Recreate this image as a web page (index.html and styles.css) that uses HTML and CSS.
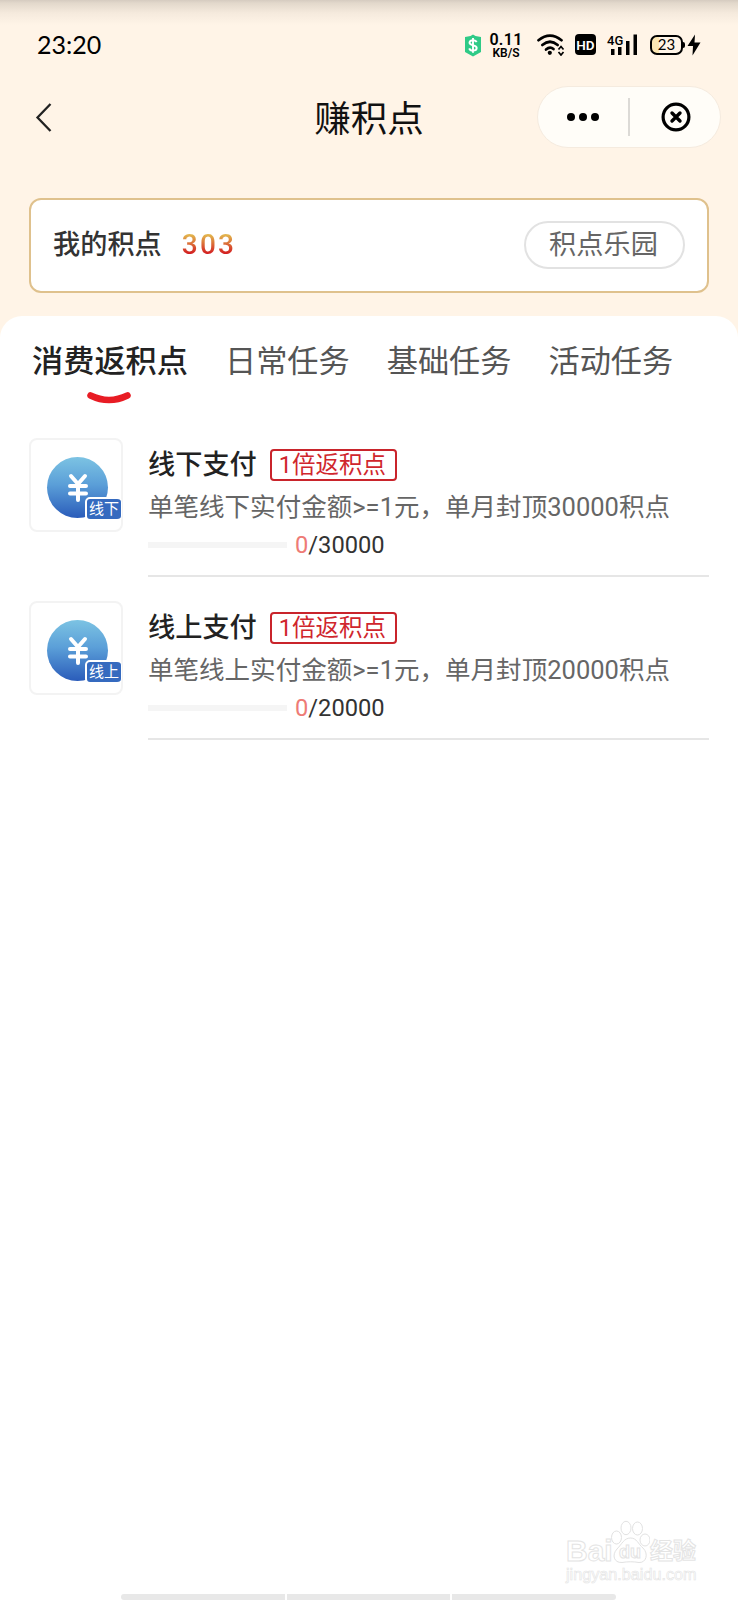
FILE: index.html
```html
<!DOCTYPE html>
<html lang="zh-CN">
<head>
  <meta charset="UTF-8">
  <meta name="viewport" content="width=device-width, initial-scale=1">
  <title>赚积点</title>
  <link rel="stylesheet" href="styles.css">
</head>
<body>
  <div class="status-bar">
    <span class="time">23:20</span>
    <div class="status-icons">
      <svg class="icon-pay" width="18" height="23" viewBox="0 0 18 23">
        <path d="M9 0.5 L11.5 2 L17 3 V18 L9 22.5 L1 18 V3 L6.500 2 Z" fill="#2fca87"/>
        <path d="M12.600 8.200 C12 6.600 10.500 6.200 9 6.200 C7 6.200 5.500 7.200 5.500 8.700 C5.500 12 12.700 10.400 12.700 14 C12.700 15.700 11 16.600 9 16.600 C7.200 16.600 5.700 15.900 5.200 14.400 M9 4 V18.800" fill="none" stroke="#fff" stroke-width="1.900"/>
      </svg>
      <div class="speed"><b>0.11</b><i>KB/S</i></div>
      <svg class="icon-wifi" width="28" height="22" viewBox="0 0 28 22">
        <g fill="none" stroke="#000" stroke-width="2.700" stroke-linecap="round">
          <path d="M1.500 6.200 Q13 -3 24.500 6.200"/>
          <path d="M5.300 11 Q13 4.500 20.700 11"/>
          <path d="M9 15.500 Q13 12 16.500 15"/>
        </g>
        <circle cx="12.800" cy="18.800" r="2.100"/>
        <path d="M21.500 15.500 L24 12.500 L26.500 15.500 M21.500 18 L24 21 L26.500 18" fill="none" stroke="#000" stroke-width="1.700"/>
      </svg>
      <span class="hd">HD</span>
      <div class="signal">
        <span>4G</span>
        <svg width="30" height="22" viewBox="0 0 30 22">
          <path d="M4 15h3.500v6H4z M11 13h3.500v8H11z M19 7h3.500v14H19z M26.500 0.500H30v20.500h-3.500z"/>
        </svg>
      </div>
      <div class="battery"><span>23</span></div>
      <svg class="icon-bolt" width="14" height="22" viewBox="0 0 14 22">
        <path d="M8 0.500 L0.500 12 H6 L5.500 21.500 L13.500 8.500 H7.500 Z"/>
      </svg>
    </div>
  </div>

  <div class="nav">
    <svg class="back" width="18" height="32" viewBox="0 0 18 32">
      <path d="M15.500 3 L2.500 16.500 L15.500 30" fill="none" stroke="#222" stroke-width="2.300"/>
    </svg>
    <h1>赚积点</h1>
    <div class="capsule">
      <svg width="34" height="10" viewBox="0 0 34 10">
        <circle cx="5" cy="5" r="4"/><circle cx="17" cy="5" r="4"/><circle cx="29" cy="5" r="4"/>
      </svg>
      <span class="line"></span>
      <svg width="30" height="30" viewBox="0 0 30 30">
        <circle cx="15" cy="15" r="12.900" fill="none" stroke="#000" stroke-width="3.200"/>
        <path d="M11 11 L19 19 M19 11 L11 19" stroke="#000" stroke-width="3.400" stroke-linecap="round"/>
      </svg>
    </div>
  </div>

  <div class="card">
    <span class="label">我的积点</span>
    <span class="points">303</span>
    <a class="park">积点乐园</a>
  </div>

  <div class="wrap">
    <div class="tabs">
      <div class="tab active">消费返积点
        <svg class="smile" width="44" height="14" viewBox="0 0 44 14">
          <path d="M3.500 3.500 Q22 12.500 40.500 3.500" fill="none" stroke="#e81c24" stroke-width="6.500" stroke-linecap="round"/>
        </svg>
      </div>
      <div class="tab">日常任务</div>
      <div class="tab">基础任务</div>
      <div class="tab">活动任务</div>
    </div>

    <ul class="list">
      <li>
        <div class="thumb">
          <div class="coin">
            <svg width="22" height="30" viewBox="0 0 22 30">
              <path d="M4 3 L11 11 L18 3 M11 11 V27 M3 13 H19 M3 20.500 H19" fill="none" stroke="#fff" stroke-width="4" stroke-linecap="round"/>
            </svg>
          </div>
          <span class="badge">线下</span>
        </div>
        <div class="info">
          <div class="title">线下支付<span class="tag">1倍返积点</span></div>
          <p class="desc">单笔线下实付金额&gt;=1元，单月封顶30000积点</p>
          <div class="progress"><span class="bar"></span><em>0</em>/30000</div>
        </div>
      </li>
      <li>
        <div class="thumb">
          <div class="coin">
            <svg width="22" height="30" viewBox="0 0 22 30">
              <path d="M4 3 L11 11 L18 3 M11 11 V27 M3 13 H19 M3 20.500 H19" fill="none" stroke="#fff" stroke-width="4" stroke-linecap="round"/>
            </svg>
          </div>
          <span class="badge">线上</span>
        </div>
        <div class="info">
          <div class="title">线上支付<span class="tag">1倍返积点</span></div>
          <p class="desc">单笔线上实付金额&gt;=1元，单月封顶20000积点</p>
          <div class="progress"><span class="bar"></span><em>0</em>/20000</div>
        </div>
      </li>
    </ul>
  </div>

  <div class="watermark">
    <div class="logo">
      <span class="bai">Bai</span>
      <div class="paw">
        <svg width="40" height="44" viewBox="0 0 40 44">
          <g fill="#fff" stroke="#e2e2e2" stroke-width="1">
            <ellipse cx="6.500" cy="17.500" rx="5" ry="6.500"/>
            <ellipse cx="16" cy="8" rx="5" ry="6.700"/>
            <ellipse cx="27.500" cy="8.500" rx="5" ry="6.500"/>
            <ellipse cx="35" cy="20" rx="5" ry="6"/>
            <path d="M20.500 18 C27 18 28 24 33 28 C39 34 36 43 29 42.500 C23 41.500 18 41.500 12 42.500 C4 43 1.500 35 7 29 C12 24 14 18 20.500 18 Z"/>
          </g>
        </svg>
        <span>du</span>
      </div>
      <span class="jy">经验</span>
    </div>
    <div class="site">jingyan.baidu.com</div>
  </div>

  <div class="home-bar"><i></i><i></i><i></i></div>
</body>
</html>
```

FILE: styles.css
```css
* {
  margin: 0;
  padding: 0;
  box-sizing: border-box;
}
html, body {
  width: 100%;
  height: 1600px;
}
body {
  position: relative;
  display: flex;
  flex-direction: column;
  font-family: Roboto, "Noto Sans CJK SC", sans-serif;
  color: #333;
  background: linear-gradient(#d5cbc0 0, #e2d8cb 3px, #f5eadd 13px, #fff4e7 25px);
  overflow: hidden;
}
svg {
  display: block;
  flex: none;
}
i, em {
  font-style: normal;
}

/* status bar */
.status-bar {
  display: flex;
  justify-content: space-between;
  height: 86px;
  padding: 34px 37px 0 37px;
  color: #000;
}
.time {
  height: 24px;
  line-height: 21px;
  font-family: Lato, sans-serif;
  font-size: 25px;
}
.status-icons {
  display: flex;
  height: 22px;
}
.speed {
  display: flex;
  flex-direction: column;
  width: 34px;
  margin: -1px 0 0 7px;
  text-align: center;
}
.speed b {
  font-size: 16px;
  font-weight: 600;
  line-height: 14px;
  letter-spacing: .3px;
}
.speed i {
  font-size: 12px;
  font-weight: 600;
  line-height: 12px;
}
.icon-wifi {
  margin: 0 0 0 14px;
}
.hd {
  width: 21px;
  height: 21px;
  margin: 0 0 0 10px;
  border-radius: 4px;
  font-size: 13.5px;
  font-weight: 600;
  line-height: 22px;
  text-align: center;
  color: #fff;
  background: #000;
}
.signal {
  position: relative;
  margin-left: 11px;
}
.signal span {
  position: absolute;
  left: 0;
  top: 1px;
  font-size: 13px;
  font-weight: 500;
  line-height: 12px;
}
.battery {
  position: relative;
  width: 33px;
  height: 20px;
  margin: 1px 0 0 13px;
  border: 2px solid #000;
  border-radius: 7px;
  font-family: Lato, sans-serif;
  font-size: 15px;
  line-height: 15px;
  text-align: center;
  background: linear-gradient(90deg, #fbe6b4 25%, transparent 26%);
}
.battery::after {
  content: "";
  position: absolute;
  right: -4px;
  top: 5px;
  width: 2px;
  height: 6px;
  border-radius: 0 2px 2px 0;
  background: #000;
}
.icon-bolt {
  margin-left: 4px;
}

/* nav */
.nav {
  display: grid;
  grid-template-columns: 184px 1fr 184px;
  align-items: center;
  height: 62px;
  padding: 0 17px;
}
.back {
  margin-left: 18px;
}
.nav h1 {
  height: 62px;
  font-size: 36.5px;
  font-weight: 400;
  line-height: 68px;
  text-align: center;
  color: #111;
}
.capsule {
  display: flex;
  align-items: center;
  width: 184px;
  height: 62px;
  padding-left: 28px;
  border: 1px solid #f5ebdf;
  border-radius: 31px;
  background: #fffdf8;
}
.capsule .line {
  width: 2px;
  height: 38px;
  margin: 0 31px 0 28px;
  background: #dcdad6;
}

/* points */
.card {
  display: flex;
  align-items: center;
  height: 95px;
  margin: 50px 29px 23px;
  padding: 0 22px 2px;
  border: 2px solid #dfc18d;
  border-radius: 12px;
  background: #fff;
}
.label {
  font-size: 27.2px;
  font-weight: 500;
  line-height: 40px;
}
.points {
  margin-left: 20px;
  font-size: 28px;
  font-weight: 500;
  line-height: 28px;
  letter-spacing: 2.2px;
  color: transparent;
  background: linear-gradient(#e2b34c 15%, #d2141e 85%);
  -webkit-background-clip: text;
  background-clip: text;
}
.park {
  width: 161px;
  height: 48px;
  margin-left: auto;
  padding-right: 2px;
  border: 2px solid #e2e2e2;
  border-radius: 24px;
  font-size: 27.2px;
  line-height: 44px;
  text-align: center;
  color: #666;
}

.wrap {
  flex: 1;
  border-radius: 22px 22px 0 0;
  background: #fff;
}
.tabs {
  display: flex;
  gap: 37px;
  height: 122px;
  padding: 22px 0 0 32px;
  font-size: 31.2px;
  line-height: 48px;
  color: #555;
}
.tab {
  white-space: nowrap;
}
.active {
  font-weight: 500;
  color: #222;
}
.smile {
  margin: 6px auto 0 55px;
}

/* list */
.list {
  list-style: none;
  padding: 0 29px;
}
.list li {
  display: flex;
  gap: 25px;
  height: 163px;
}
.thumb {
  position: relative;
  flex: none;
  width: 94px;
  height: 94px;
  padding: 17px 0 0 16px;
  border: 2px solid #f3f3f3;
  border-radius: 8px;
}
.coin {
  display: flex;
  align-items: center;
  justify-content: center;
  width: 61px;
  height: 61px;
  border-radius: 50%;
  background: linear-gradient(#7cc3e3, #5b9fd8 45%, #2a5cba);
}
.badge {
  position: absolute;
  right: -1px;
  bottom: 9px;
  width: 37px;
  height: 24px;
  border: 2px solid #fff;
  border-right-width: 1px;
  border-radius: 5px;
  font-size: 15px;
  line-height: 20px;
  text-align: center;
  color: #fff;
  background: #356abf;
}
.info {
  flex: 1;
  height: 139px;
  border-bottom: 2px solid #e6e6e6;
}
.title {
  display: flex;
  align-items: center;
  height: 50px;
  padding-top: 3px;
  font-size: 27.2px;
  font-weight: 500;
  line-height: 40px;
  color: #222;
}
.tag {
  height: 32px;
  margin-left: 13px;
  padding: 0 9px 0 7px;
  border: 2px solid #c9242b;
  border-radius: 4px;
  font-size: 23.5px;
  font-weight: 400;
  line-height: 28px;
  color: #d0262d;
}
.desc {
  font-size: 25.5px;
  line-height: 38px;
  white-space: nowrap;
  letter-spacing: .03px;
  color: #666;
}
.progress {
  display: flex;
  align-items: center;
  height: 38px;
  font-size: 23.7px;
  line-height: 38px;
}
.progress .bar {
  width: 139px;
  height: 6px;
  margin-right: 8px;
  background: #f5f5f5;
}
.progress em {
  color: #ee7b76;
}

.watermark {
  position: absolute;
  left: 566px;
  top: 1520px;
  font-family: "Liberation Sans", "Noto Sans CJK SC", sans-serif;
  color: #fff;
  -webkit-text-stroke: 1px #e4e4e4;
}
.logo {
  display: flex;
  height: 44px;
  font-weight: 700;
}
.bai {
  width: 44px;
  font-size: 30px;
  line-height: 62px;
}
.paw {
  position: relative;
}
.paw span {
  position: absolute;
  left: 9px;
  top: 23px;
  font-size: 18px;
  line-height: 18px;
}
.jy {
  font-size: 23px;
  line-height: 62px;
}
.site {
  font-size: 16.2px;
  line-height: 20px;
  -webkit-text-stroke: .6px #e4e4e4;
}

.home-bar {
  position: absolute;
  left: 121px;
  bottom: 0;
  display: flex;
  gap: 2px;
  width: 495px;
  height: 6px;
  border-radius: 3px;
  overflow: hidden;
}
.home-bar i {
  flex: 1;
  background: #e8e8e8;
}
```
